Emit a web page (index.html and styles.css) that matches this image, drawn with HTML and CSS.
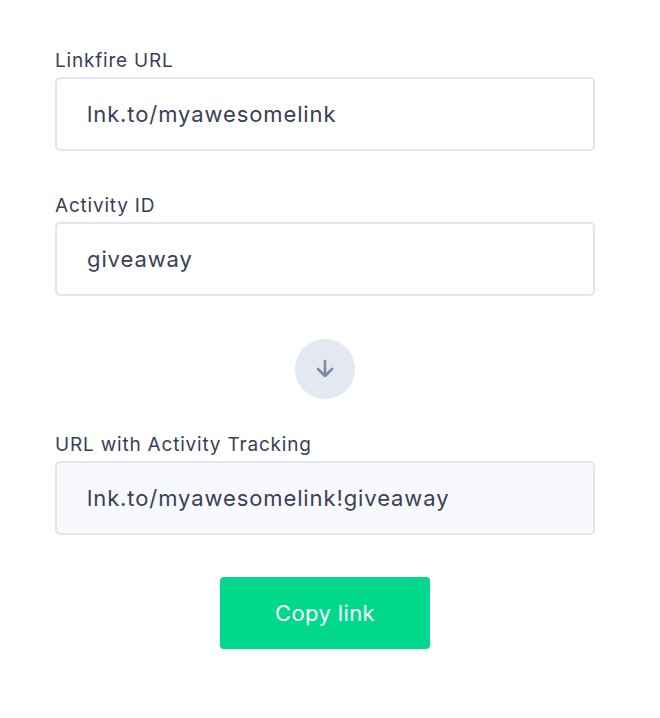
FILE: index.html
```html
<!DOCTYPE html>
<html>
<head>
<meta charset="utf-8">
<link rel="stylesheet" href="styles.css">
</head>
<body>
<div class="form">
  <div class="field">
    <label class="label">Linkfire URL</label>
    <div class="input">lnk.to/myawesomelink</div>
  </div>
  <div class="field">
    <label class="label">Activity ID</label>
    <div class="input">giveaway</div>
  </div>
  <div class="arrow-row">
    <div class="arrow">
      <svg width="22" height="22" viewBox="0 0 22 22"><path d="M11 3v15M4 11l7 7 7-7" fill="none" stroke="#7d8ca0" stroke-width="2.6" stroke-linecap="round" stroke-linejoin="round"/></svg>
    </div>
  </div>
  <div class="field">
    <label class="label">URL with Activity Tracking</label>
    <div class="input result">lnk.to/myawesomelink!giveaway</div>
  </div>
  <div class="btn-row">
    <button class="btn">Copy link</button>
  </div>
</div>
</body>
</html>
```
FILE: styles.css
```css
* { box-sizing: border-box; }
body {
  margin: 0;
  background: #fff;
  font-family: "Inter", "Liberation Sans", sans-serif;
  color: #3a4056;
}
.form {
  width: 540px;
  margin-left: 55px;
  padding-top: 49px;
  display: flex;
  flex-direction: column;
}
.field { display: flex; flex-direction: column; }
.field + .field { margin-top: 43px; }
.label {
  font-size: 19px;
  line-height: 24px;
  letter-spacing: 0.8px;
  margin-bottom: 4px;
  color: #3a4056;
}
.input {
  height: 74px;
  border: 2px solid #e0e5ee;
  border-radius: 5px;
  padding-left: 30px;
  display: flex;
  align-items: center;
  font-size: 22px;
  letter-spacing: 0.9px;
  color: #3a4056;
}
.input.result { background: #f7f9fc; }
.arrow-row {
  display: flex;
  justify-content: center;
  margin-top: 43px;
  margin-bottom: 34px;
}
.arrow {
  width: 60px;
  height: 60px;
  border-radius: 50%;
  background: #e3e8f1;
  display: flex;
  align-items: center;
  justify-content: center;
}
.btn-row {
  display: flex;
  justify-content: center;
  margin-top: 42px;
}
.btn {
  width: 210px;
  height: 72px;
  border: none;
  border-radius: 4px;
  background: #00d98b;
  color: #fff;
  font-family: inherit;
  font-size: 22px;
  letter-spacing: 0.4px;
}
```
